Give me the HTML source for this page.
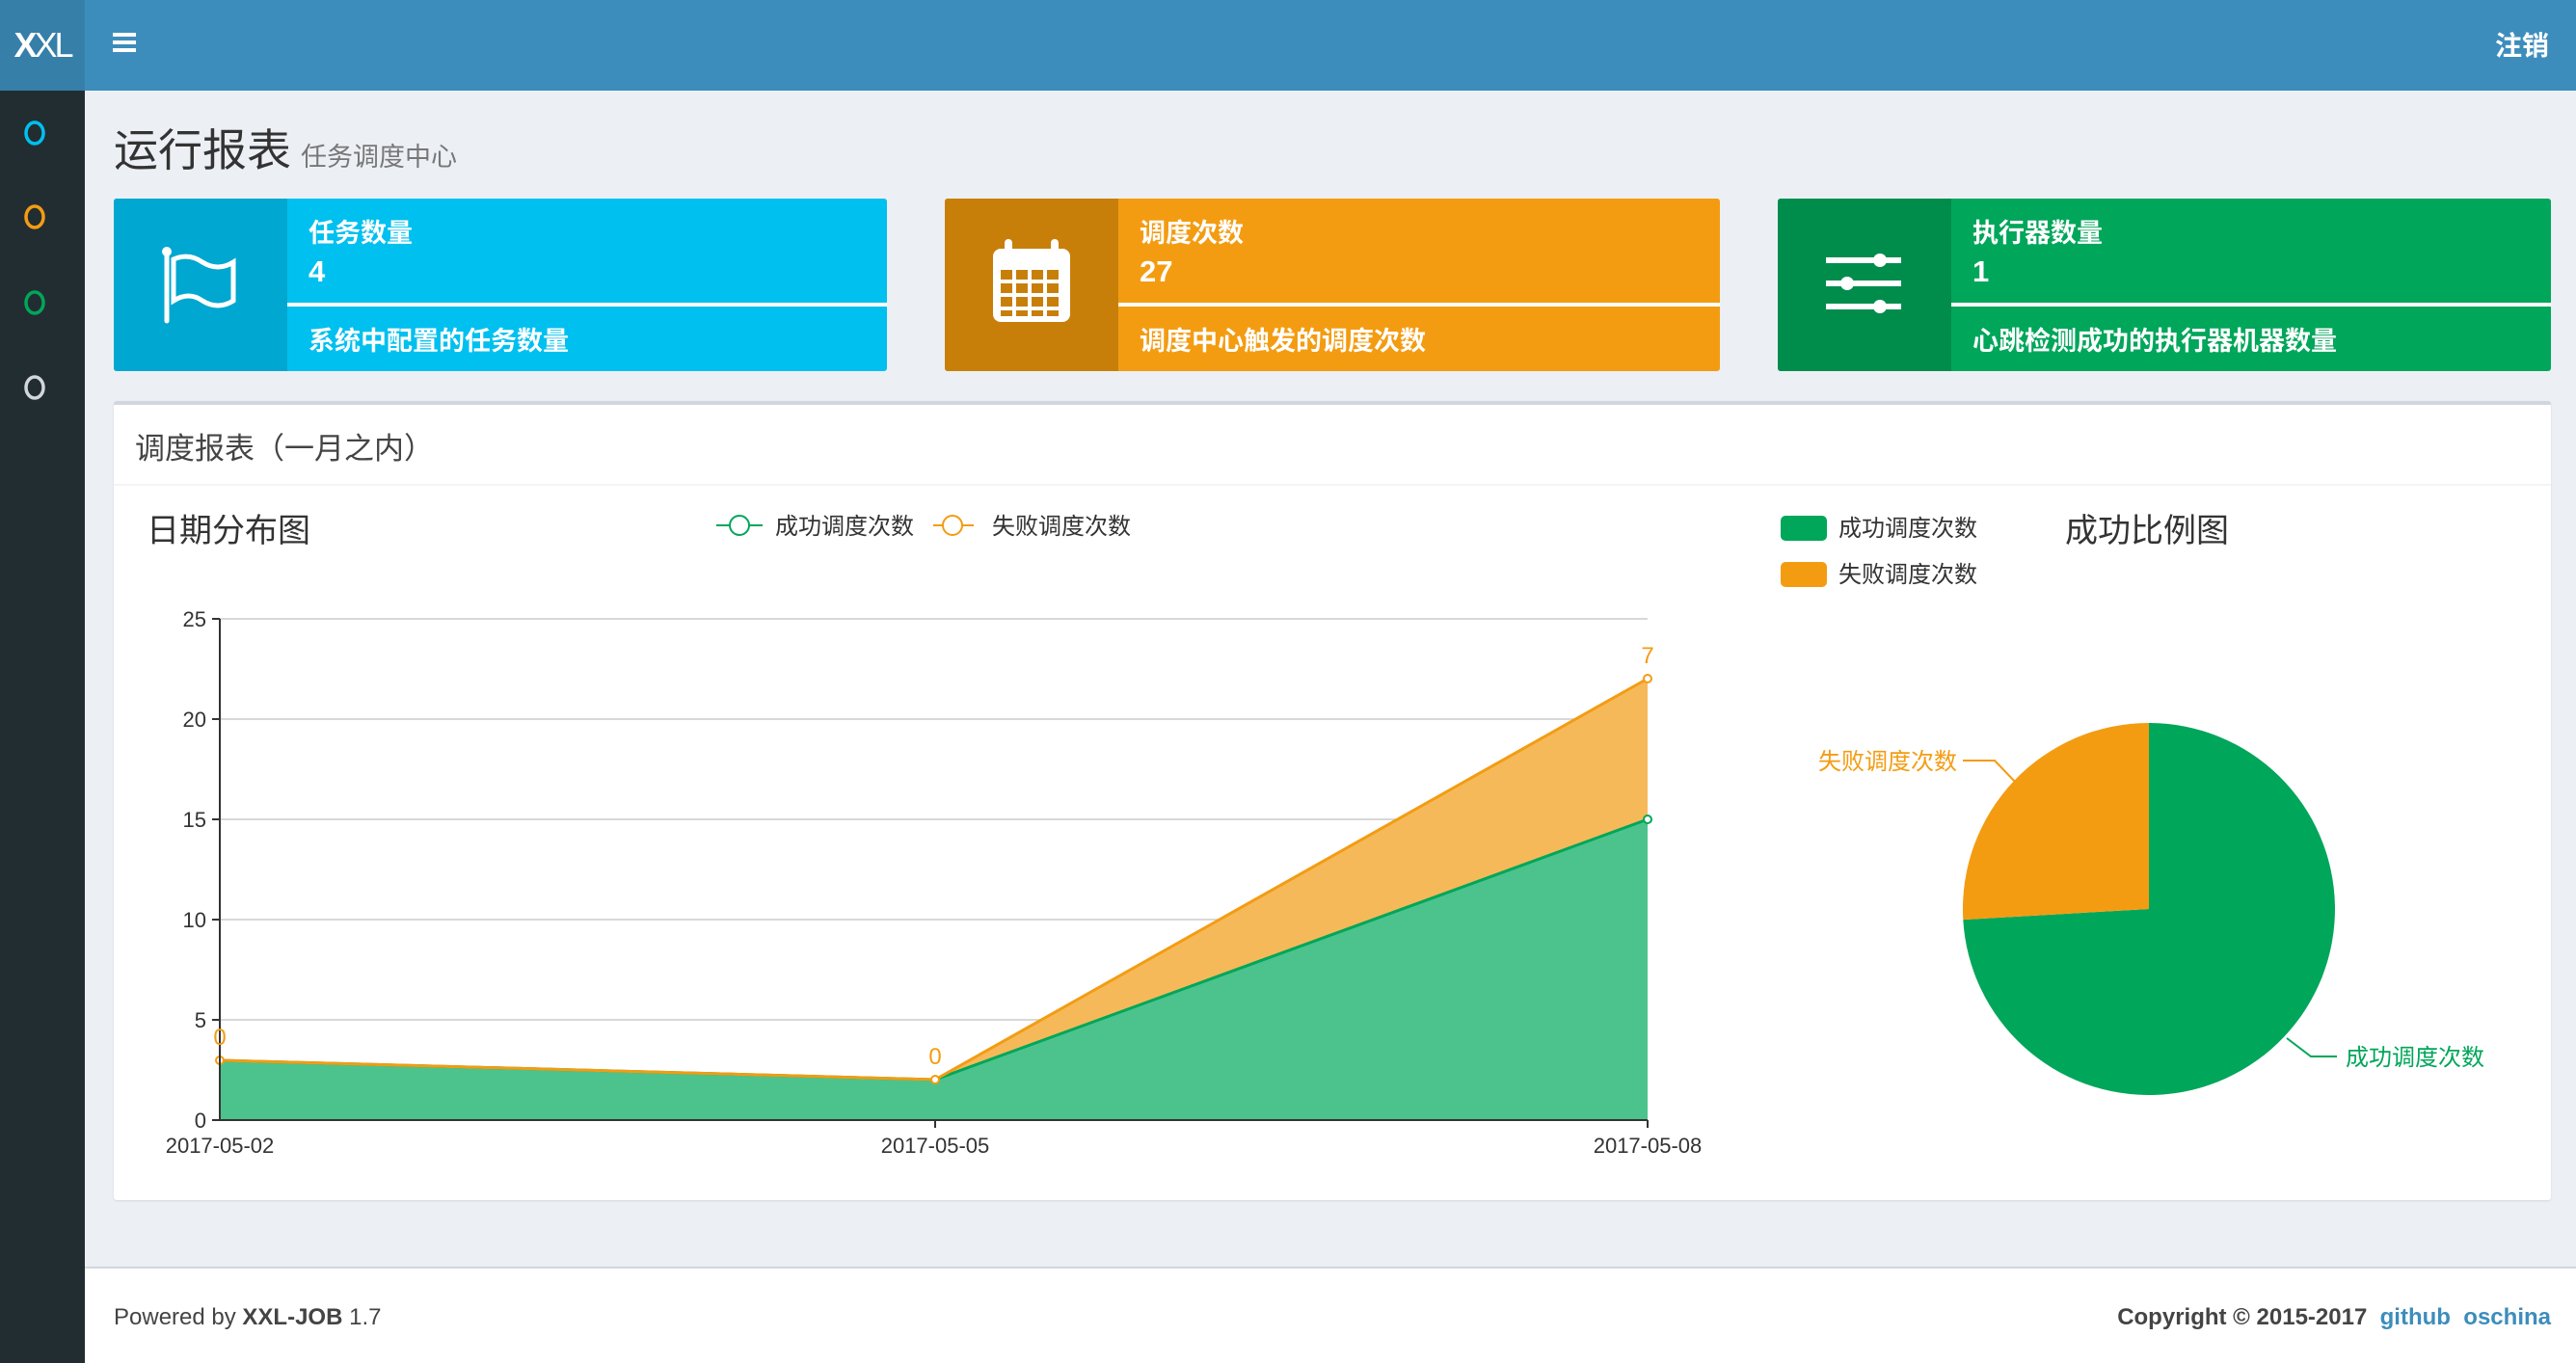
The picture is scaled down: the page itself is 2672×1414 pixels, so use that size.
<!DOCTYPE html>
<html><head><meta charset="utf-8"><style>
*{margin:0;padding:0;box-sizing:border-box}
body{width:2672px;height:1414px;overflow:hidden;background:#ecf0f5;font-family:"Liberation Sans","Noto Sans CJK SC",sans-serif;position:relative;color:#333}
.a{position:absolute;white-space:nowrap}
.box{position:absolute;top:206px;height:179px;border-radius:3px;overflow:hidden;color:#fff}
.box .ic{position:absolute;left:0;top:0;width:180px;height:100%}
.box .t{position:absolute;left:202px;top:14px;font-size:27px;font-weight:bold}
.box .n{position:absolute;left:202px;top:58px;font-size:31px;font-weight:bold}
.box .l{position:absolute;left:180px;right:0;top:108px;height:4px;background:#fff}
.box .d{position:absolute;left:202px;top:126px;font-size:27px;font-weight:bold}
</style></head><body>
<div class="a" style="left:0;top:0;width:2672px;height:94px;background:#3c8dbc"></div>
<div class="a" style="left:0;top:0;width:88px;height:94px;background:#367fa9;color:#fff;font-size:36px;line-height:94px;text-align:center;letter-spacing:-3px"><b>X</b>XL</div>
<div class="a" style="left:117px;top:34px;width:24px;height:4px;background:#fff;box-shadow:0 8px 0 #fff,0 16px 0 #fff"></div>
<div class="a" style="right:28px;top:26px;color:#fff;font-size:28px;font-weight:bold">注销</div>
<div class="a" style="left:0;top:94px;width:88px;height:1320px;background:#222d32"></div>
<svg class="a" style="left:0;top:94px" width="88" height="340"><g fill="none" stroke-width="3.5"><ellipse cx="36" cy="44" rx="9" ry="11" stroke="#00c0ef"/><ellipse cx="36" cy="131" rx="9" ry="11" stroke="#f39c12"/><ellipse cx="36" cy="220" rx="9" ry="11" stroke="#00a65a"/><ellipse cx="36" cy="308" rx="9" ry="11" stroke="#d2d6de"/></g></svg>
<div class="a" style="left:118px;top:120px;font-size:46px;color:#333">运行报表<span style="font-size:27px;color:#777;margin-left:10px">任务调度中心</span></div>

<div class="box" style="left:118px;width:802px;background:#00c0ef"><div class="ic" style="background:#00a7d0"><svg width="180" height="179"><g fill="none" stroke="#fff" stroke-width="5" stroke-linecap="round"><line x1="55" y1="55" x2="55" y2="127"/><path d="M62 63 Q78 56 92 66 Q108 76 124 66 L124 106 Q108 116 92 106 Q78 96 62 106 Z"/></g><circle cx="55" cy="55" r="5" fill="#fff"/></svg></div><div class="t">任务数量</div><div class="n">4</div><div class="l"></div><div class="d">系统中配置的任务数量</div></div>

<div class="box" style="left:980px;width:804px;background:#f39c12"><div class="ic" style="background:#c87f0a"><svg width="180" height="179"><g fill="#fff"><rect x="50" y="52" width="80" height="76" rx="8"/><rect x="62" y="42" width="8" height="20" rx="4"/><rect x="110" y="42" width="8" height="20" rx="4"/></g><g fill="#c87f0a"><rect x="58" y="74" width="12" height="10"/><rect x="74" y="74" width="12" height="10"/><rect x="90" y="74" width="12" height="10"/><rect x="106" y="74" width="12" height="10"/><rect x="58" y="88" width="12" height="10"/><rect x="74" y="88" width="12" height="10"/><rect x="90" y="88" width="12" height="10"/><rect x="106" y="88" width="12" height="10"/><rect x="58" y="102" width="12" height="10"/><rect x="74" y="102" width="12" height="10"/><rect x="90" y="102" width="12" height="10"/><rect x="106" y="102" width="12" height="10"/><rect x="58" y="116" width="12" height="6"/><rect x="74" y="116" width="12" height="6"/><rect x="90" y="116" width="12" height="6"/><rect x="106" y="116" width="12" height="6"/></g></svg></div><div class="t">调度次数</div><div class="n">27</div><div class="l"></div><div class="d">调度中心触发的调度次数</div></div>

<div class="box" style="left:1844px;width:802px;background:#00a65a"><div class="ic" style="background:#008d4c"><svg width="180" height="179"><g stroke="#fff" stroke-width="6"><line x1="50" y1="64" x2="128" y2="64"/><line x1="50" y1="88" x2="128" y2="88"/><line x1="50" y1="112" x2="128" y2="112"/></g><g fill="#fff"><circle cx="106" cy="64" r="7"/><circle cx="72" cy="88" r="7"/><circle cx="106" cy="112" r="7"/></g></svg></div><div class="t">执行器数量</div><div class="n">1</div><div class="l"></div><div class="d">心跳检测成功的执行器机器数量</div></div>

<div class="a" style="left:118px;top:416px;width:2528px;height:829px;background:#fff;border-top:4px solid #d2d6de;border-radius:3px;box-shadow:0 1px 2px rgba(0,0,0,.1)"></div>
<div class="a" style="left:118px;top:502px;width:2528px;height:2px;background:#f4f4f4"></div>
<div class="a" style="left:140px;top:440px;font-size:31px;color:#444">调度报表（一月之内）</div>

<svg class="a" style="left:0;top:0" width="2672" height="1414" font-family="Liberation Sans,Noto Sans CJK SC,sans-serif">
<text x="152" y="562" font-size="34" fill="#333">日期分布图</text>
<line x1="743" y1="545" x2="791" y2="545" stroke="#00a65a" stroke-width="2"/><circle cx="767" cy="545" r="10" fill="#fff" stroke="#00a65a" stroke-width="2"/>
<text x="804" y="554" font-size="24" fill="#333">成功调度次数</text>
<line x1="968" y1="545" x2="1010" y2="545" stroke="#f39c12" stroke-width="2"/><circle cx="988" cy="545" r="10" fill="#fff" stroke="#f39c12" stroke-width="2"/>
<text x="1029" y="554" font-size="24" fill="#333">失败调度次数</text>
<g stroke="#ccc" stroke-width="1.5"><line x1="228" y1="642" x2="1709" y2="642"/><line x1="228" y1="746" x2="1709" y2="746"/><line x1="228" y1="850" x2="1709" y2="850"/><line x1="228" y1="954" x2="1709" y2="954"/><line x1="228" y1="1058" x2="1709" y2="1058"/></g>
<polygon points="228,1100 970,1120 1709,850 1709,1162 228,1162" fill="#4cc38c"/>
<polygon points="228,1100 970,1120 1709,704 1709,850 970,1120" fill="#f6b95a"/>
<polyline points="228,1100 970,1120 1709,850" fill="none" stroke="#00a65a" stroke-width="3"/>
<polyline points="228,1100 970,1120 1709,704" fill="none" stroke="#f39c12" stroke-width="3"/>
<g fill="#fff" stroke-width="2"><circle cx="228" cy="1100" r="4" stroke="#f39c12"/><circle cx="970" cy="1120" r="4" stroke="#f39c12"/><circle cx="1709" cy="850" r="4" stroke="#00a65a"/><circle cx="1709" cy="704" r="4" stroke="#f39c12"/></g>
<g stroke="#333" stroke-width="2"><line x1="228" y1="642" x2="228" y2="1163"/><line x1="227" y1="1162" x2="1709" y2="1162"/><line x1="220" y1="642" x2="228" y2="642"/><line x1="220" y1="746" x2="228" y2="746"/><line x1="220" y1="850" x2="228" y2="850"/><line x1="220" y1="954" x2="228" y2="954"/><line x1="220" y1="1058" x2="228" y2="1058"/><line x1="220" y1="1162" x2="228" y2="1162"/><line x1="970" y1="1162" x2="970" y2="1170"/><line x1="1709" y1="1162" x2="1709" y2="1170"/></g>
<g font-size="22" fill="#333" text-anchor="end"><text x="214" y="650">25</text><text x="214" y="754">20</text><text x="214" y="858">15</text><text x="214" y="962">10</text><text x="214" y="1066">5</text><text x="214" y="1170">0</text></g>
<g font-size="22" fill="#333" text-anchor="middle"><text x="228" y="1196">2017-05-02</text><text x="970" y="1196">2017-05-05</text><text x="1709" y="1196">2017-05-08</text></g>
<g font-size="24" fill="#f39c12" text-anchor="middle"><text x="228" y="1084">0</text><text x="970" y="1104">0</text><text x="1709" y="688">7</text></g>
<rect x="1847" y="535" width="48" height="26" rx="5" fill="#00a65a"/><text x="1907" y="556" font-size="24" fill="#333">成功调度次数</text>
<rect x="1847" y="583" width="48" height="26" rx="5" fill="#f39c12"/><text x="1907" y="604" font-size="24" fill="#333">失败调度次数</text>
<text x="2142" y="562" font-size="34" fill="#333">成功比例图</text>
<path d="M2229 943 L2229 750 A193 193 0 1 1 2036.3 954.1 Z" fill="#00a65a"/>
<path d="M2229 943 L2036.3 954.1 A193 193 0 0 1 2229 750 Z" fill="#f39c12"/>
<polyline points="2036,789 2069,789 2093,814" fill="none" stroke="#f39c12" stroke-width="2"/>
<text x="1886" y="798" font-size="24" fill="#f39c12">失败调度次数</text>
<polyline points="2372,1077 2397,1096 2424,1096" fill="none" stroke="#00a65a" stroke-width="2"/>
<text x="2433" y="1105" font-size="24" fill="#00a65a">成功调度次数</text>
</svg>

<div class="a" style="left:88px;top:1314px;width:2584px;height:100px;background:#fff;border-top:2px solid #d2d6de"></div>
<div class="a" style="left:118px;top:1353px;font-size:24px;color:#444">Powered by <b>XXL-JOB</b> 1.7</div>
<div class="a" style="right:26px;top:1353px;font-size:24px;color:#444;font-weight:bold">Copyright © 2015-2017 &nbsp;<span style="color:#3c8dbc">github</span>&nbsp; <span style="color:#3c8dbc">oschina</span></div>
</body></html>
